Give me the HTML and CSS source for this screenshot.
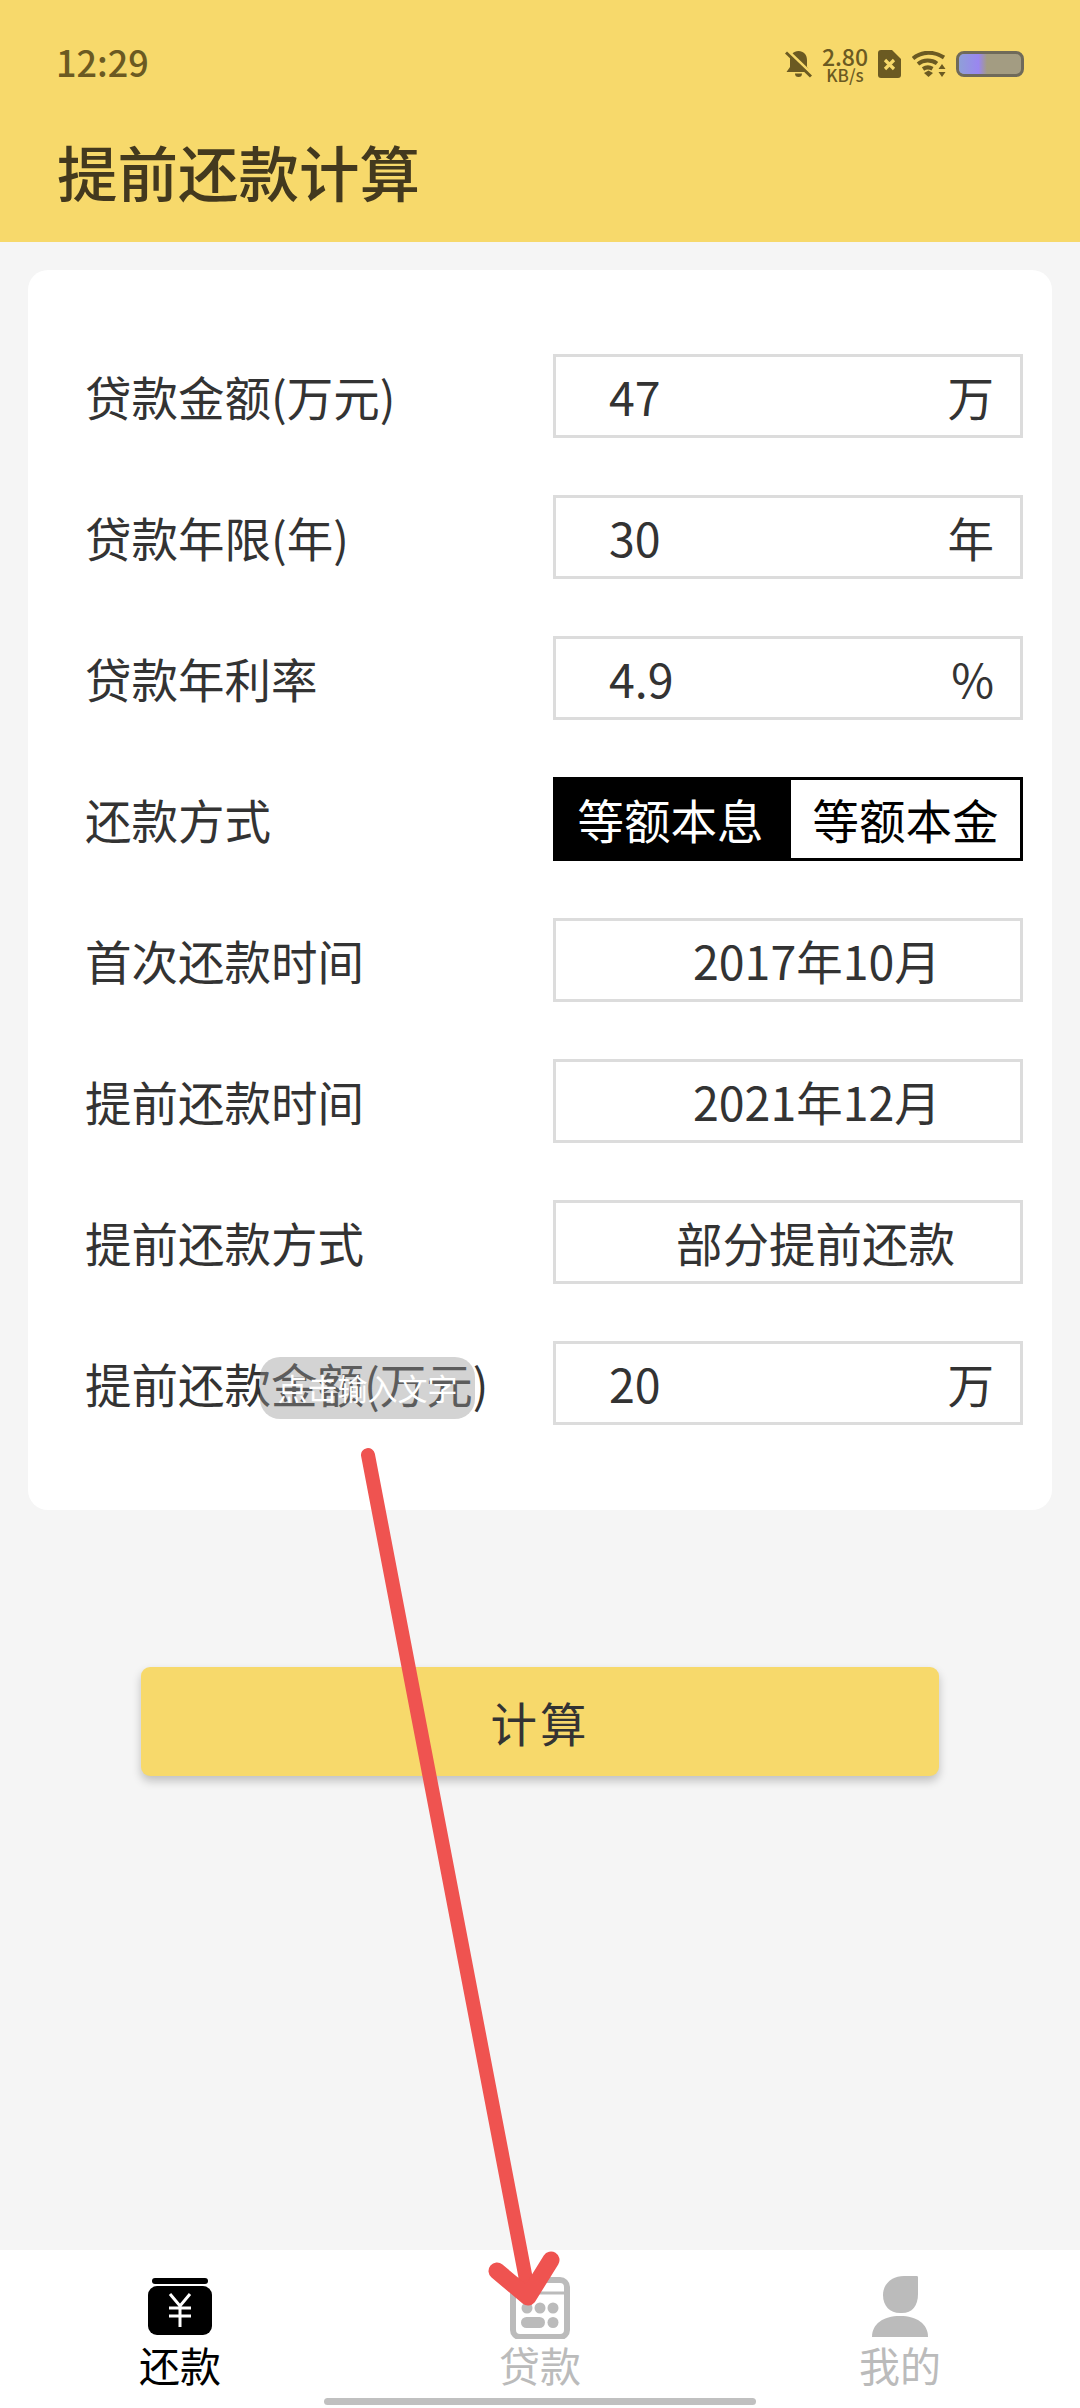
FILE: index.html
```html
<!DOCTYPE html>
<html lang="zh-CN">
<head>
  <meta charset="UTF-8" />
  <meta name="viewport" content="width=device-width, initial-scale=1.0"/>
  <title>提前还款计算</title>
  <link rel="stylesheet" href="styles.css">
</head>
<body>
  <div class="app">
    <header class="header">
      <div class="status-bar">
        <span class="time">12:29</span>
        <div class="status-icons">
          <svg class="icon-bell" viewBox="0 0 27 28">
            <path d="M13.5 1c5 0 8.500 3.500 8.500 9v7l3.500 5H1.500L5 17v-7c0-5.500 3.500-9 8.500-9z" fill="#6b5a22"/>
            <path d="M10 23.500h7a3.500 3.500 0 0 1-7 0z" fill="#6b5a22"/>
            <path d="M3 1L27 24" stroke="#f7d96b" stroke-width="3"/>
            <path d="M1 2.500l25 24" stroke="#6b5a22" stroke-width="3"/>
          </svg>
          <div class="speed">
            <span class="speed-num">2.80</span>
            <span class="speed-unit">KB/s</span>
          </div>
          <svg class="icon-sim" viewBox="0 0 23 28">
            <path d="M3 0h11l9 9v16a3 3 0 0 1-3 3H3a3 3 0 0 1-3-3V3a3 3 0 0 1 3-3z" fill="#6b5a22"/>
            <path d="M7 10l9 9M16 10l-9 9" stroke="#f7d96b" stroke-width="3.200"/>
          </svg>
          <svg class="icon-wifi" viewBox="0 0 34 26">
            <g fill="none" stroke="#6b5a22" stroke-width="4">
              <path d="M1 7.500C10 0 22 0 32 6.500"/>
              <path d="M6 13c5.500-4.500 13.500-4.500 19-.5"/>
              <path d="M11 18c3-2 6.500-2 9.500-.3"/>
            </g>
            <path d="M12 22l4.500-2.500 4.500 2.500-4.500 4z" fill="#6b5a22"/>
            <path d="M30 13l3.500 5h-7zM30 26l-3.500-5h7z" fill="#6b5a22"/>
          </svg>
          <div class="battery"><div class="battery-fill"></div></div>
        </div>
      </div>
      <h1 class="page-title">提前还款计算</h1>
    </header>

    <main class="main">
      <section class="card">
        <div class="form-row">
          <span class="form-label">贷款金额(万元)</span>
          <div class="field"><span>47</span><span>万</span></div>
        </div>
        <div class="form-row">
          <span class="form-label">贷款年限(年)</span>
          <div class="field"><span>30</span><span>年</span></div>
        </div>
        <div class="form-row">
          <span class="form-label">贷款年利率</span>
          <div class="field"><span>4.9</span><span>%</span></div>
        </div>
        <div class="form-row">
          <span class="form-label">还款方式</span>
          <div class="toggle">
            <span class="toggle-item active">等额本息</span>
            <span class="toggle-item">等额本金</span>
          </div>
        </div>
        <div class="form-row">
          <span class="form-label">首次还款时间</span>
          <div class="field field-date">2017年10月</div>
        </div>
        <div class="form-row">
          <span class="form-label">提前还款时间</span>
          <div class="field field-date">2021年12月</div>
        </div>
        <div class="form-row">
          <span class="form-label">提前还款方式</span>
          <div class="field field-mode">部分提前还款</div>
        </div>
        <div class="form-row">
          <span class="form-label">提前还款金额(万元)</span>
          <div class="field"><span>20</span><span>万</span></div>
        </div>
      </section>

      <button class="calc-btn" type="button">计算</button>
    </main>

    <nav class="tabbar">
      <div class="tab active">
        <svg class="tab-icon" viewBox="0 0 64 64">
          <rect x="4" y="3" width="56" height="6" rx="3" fill="#000"/>
          <rect x="0" y="11" width="64" height="49" rx="9" fill="#000"/>
          <path d="M22 19l10 12 10-12M21 33h22M21 41h22M32 31v21" fill="none" stroke="#fff" stroke-width="3"/>
        </svg>
        <span class="tab-label">还款</span>
      </div>
      <div class="tab">
        <svg class="tab-icon" viewBox="0 0 64 64">
          <rect x="5" y="5" width="54" height="57" rx="7" fill="none" stroke="#bbb" stroke-width="6"/>
          <path d="M5 18h54" stroke="#bbb" stroke-width="3"/>
          <circle cx="19" cy="33" r="5.500" fill="#bbb"/>
          <circle cx="32" cy="33" r="5.500" fill="#bbb"/>
          <circle cx="45" cy="33" r="5.500" fill="#bbb"/>
          <rect x="13" y="42" width="24" height="11" rx="5.500" fill="#bbb"/>
          <circle cx="45" cy="47.500" r="5.500" fill="#bbb"/>
        </svg>
        <span class="tab-label">贷款</span>
      </div>
      <div class="tab">
        <svg class="tab-icon" viewBox="0 0 64 64">
          <path d="M49 1c1 0 1 1 1 2v16c0 12-6 19-16 19h-2c-10 0-17-7-17-18C15 8 25 1 36 1z" fill="#bbb"/>
          <path d="M4 62c0-13 11-21 28-21s28 8 28 21z" fill="#bbb"/>
        </svg>
        <span class="tab-label">我的</span>
      </div>
      <div class="home-bar"></div>
    </nav>

    <div class="toast">点击输入文字</div>

    <svg class="arrow" viewBox="0 0 1080 2408">
      <path d="M368 1455L528 2290" fill="none" stroke="#ef5350" stroke-width="14" stroke-linecap="round"/>
      <path d="M497 2271L528 2297L551 2260" fill="none" stroke="#ef5350" stroke-width="17" stroke-linecap="round" stroke-linejoin="round"/>
    </svg>
  </div>
</body>
</html>
```

FILE: styles.css
```css
:root {
  --yellow: #f7d96b;
  --bg: #f5f5f5;
  --text: #333;
  --status: #6b5a22;
  --border: #dcdcdc;
  --gray: #bbb;
}

* {
  box-sizing: border-box;
}

body {
  margin: 0;
  background: var(--bg);
  font-family: "Noto Sans CJK SC", "Noto Sans", sans-serif;
  color: var(--text);
}

.app {
  position: relative;
  display: flex;
  flex-direction: column;
  width: 1080px;
  height: 2408px;
  overflow: hidden;
}

/* Header */
.header {
  height: 242px;
  background: var(--yellow);
  padding: 44px 56px 0 56px;
}

.status-bar {
  display: flex;
  align-items: center;
  justify-content: space-between;
  height: 40px;
}

.time {
  margin-bottom: 7px;
  font-size: 36px;
  font-weight: 500;
  color: var(--status);
}

.status-icons {
  display: flex;
  align-items: center;
}

.icon-bell {
  width: 27px;
  height: 28px;
}

.speed {
  display: flex;
  flex-direction: column;
  align-items: center;
  width: 46px;
  margin-left: 10px;
  font-weight: 500;
  color: var(--status);
}

.speed-num {
  font-size: 23px;
  line-height: 22px;
}

.speed-unit {
  font-size: 17px;
  line-height: 16px;
}

.icon-sim {
  width: 23px;
  height: 28px;
  margin-left: 10px;
}

.icon-wifi {
  width: 34px;
  height: 26px;
  margin-left: 11px;
}

.battery {
  width: 68px;
  height: 26px;
  margin-left: 10px;
  background: #a39c82;
  border: 3px solid #6f6a5a;
  border-radius: 8px;
  overflow: hidden;
}

.battery-fill {
  width: 28px;
  height: 100%;
  background: linear-gradient(90deg, #8f9fd8, #9a86f0 70%, #a39c82);
}

.page-title {
  margin: 45px 0 0 1px;
  font-size: 60.5px;
  line-height: 84px;
  font-weight: 500;
  color: #43391e;
}

/* Form */
.main {
  flex: 1;
  display: flex;
  flex-direction: column;
  align-items: center;
  padding: 28px 28px 0 28px;
}

.card {
  display: flex;
  flex-direction: column;
  gap: 57px;
  width: 100%;
  padding: 84px 29px 85px 57px;
  background: #fff;
  border-radius: 20px;
}

.form-row {
  display: flex;
  align-items: center;
  justify-content: space-between;
  height: 84px;
}

.form-label {
  padding-bottom: 2px;
  font-size: 46.5px;
  white-space: nowrap;
}

.field {
  display: flex;
  align-items: center;
  justify-content: space-between;
  width: 470px;
  height: 84px;
  padding: 0 26px 2px 53px;
  border: 3px solid var(--border);
  font-size: 46.5px;
}

.field-date {
  justify-content: flex-start;
  padding-left: 137px;
}

.field-mode {
  justify-content: flex-start;
  padding-left: 120px;
}

.toggle {
  display: flex;
  width: 470px;
  height: 84px;
  border: 3px solid #000;
  font-size: 46.5px;
  color: #000;
}

.toggle-item {
  display: flex;
  align-items: center;
  justify-content: center;
  flex: 1;
  padding-bottom: 2px;
}

.toggle-item.active {
  flex: 0 0 235px;
  padding-right: 6px;
  background: #000;
  color: #fff;
}

.calc-btn {
  width: 798px;
  height: 109px;
  margin: 157px 0 0 0;
  background: var(--yellow);
  border: none;
  border-radius: 9px;
  box-shadow: 0 5px 10px rgba(0, 0, 0, 0.22);
  font-family: inherit;
  font-size: 46.5px;
  letter-spacing: 3px;
  color: var(--text);
}

/* Bottom tabs */
.tabbar {
  position: relative;
  display: flex;
  height: 158px;
  background: #fff;
}

.tab {
  flex: 1;
  display: flex;
  flex-direction: column;
  align-items: center;
  padding-top: 25px;
  color: var(--gray);
}

.tab.active {
  color: #000;
}

.tab-icon {
  width: 64px;
  height: 64px;
}

.tab-label {
  font-size: 41px;
  line-height: 50px;
}

.home-bar {
  position: absolute;
  left: 324px;
  bottom: 3px;
  width: 432px;
  height: 7px;
  background: #c0c0c0;
  border-radius: 4px;
}

/* Overlays */
.toast {
  position: absolute;
  left: 260px;
  top: 1357px;
  width: 215px;
  height: 62px;
  background: rgba(150, 150, 150, 0.42);
  border-radius: 20px;
  font-size: 30px;
  line-height: 60px;
  text-align: center;
  color: #fff;
  white-space: nowrap;
}

.arrow {
  position: absolute;
  left: 0;
  top: 0;
  width: 1080px;
  height: 2408px;
  pointer-events: none;
}
```
